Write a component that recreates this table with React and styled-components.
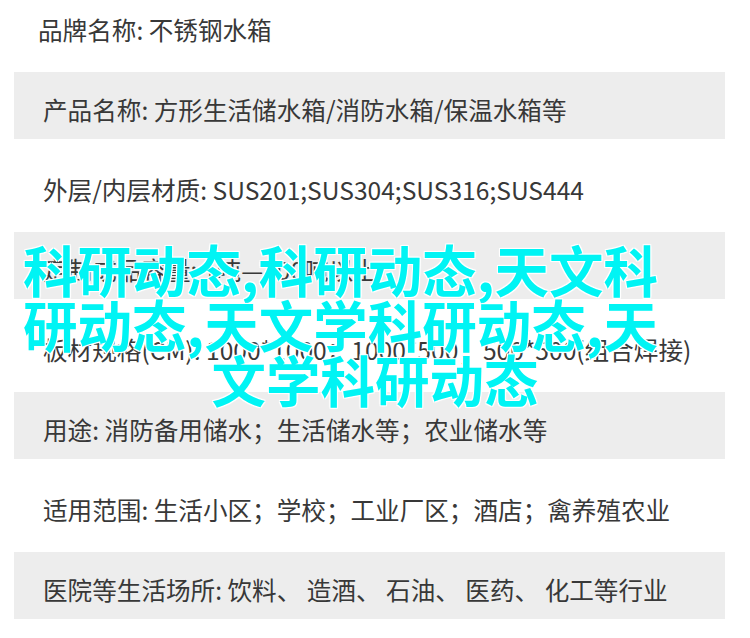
import React from "react";
import styled, { createGlobalStyle } from "styled-components";

const specs = [
    { text: "品牌名称: 不锈钢水箱", indent: 38 },
    { text: "产品名称: 方形生活储水箱/消防水箱/保温水箱等" },
    { text: "外层/内层材质: SUS201;SUS304;SUS316;SUS444" },
    { text: "定制成品容量: 1吨—300吨以上" },
    { text: "板材规格(CM): 1000*1000；1000*500；500*500(组合焊接)" },
    { text: "用途: 消防备用储水；生活储水等；农业储水等" },
    { text: "适用范围: 生活小区；学校；工业厂区；酒店；禽养殖农业" },
    { text: "医院等生活场所: 饮料、 造酒、 石油、 医药、 化工等行业" },
];

const App = () => {
    return (
        <>
            <GlobalStyle />
            <Page>
                <SpecList>
                    {specs.map((spec, i) => (
                        <SpecRow key={i} $shaded={i % 2 === 1} $indent={spec.indent}>
                            {spec.text}
                        </SpecRow>
                    ))}
                </SpecList>

                {/* title overlay */}
                <Headline>
                    <HeadLine>科研动态,科研动态,天文科</HeadLine>
                    <HeadLine>研动态,天文学科研动态,天</HeadLine>
                    <HeadLine $center>文学科研动态</HeadLine>
                </Headline>
            </Page>
        </>
    )
}

export default App

// Styled Components

const GlobalStyle = createGlobalStyle`
    html, body {
        margin: 0;
        padding: 0;
        background: #ffffff;
    }
    body {
        font-family: "Noto Sans CJK SC", "Noto Sans", sans-serif;
    }
`

const Page = styled.div`
    position: relative;
    width: 750px;
    height: 638px;
    overflow: hidden;
    background: #ffffff;
`

const SpecList = styled.div`
    display: flex;
    flex-direction: column;
    margin-top: -21px;
`

const SpecRow = styled.div`
    display: flex;
    align-items: center;
    box-sizing: border-box;
    height: ${p => (p.$shaded ? "67px" : "93px")};
    margin: ${p => (p.$shaded ? "0 25px 0 14px" : "0")};
    padding-top: 6px;
    padding-left: ${p => (p.$shaded ? 29 : (p.$indent || 43))}px;
    background-color: ${p => (p.$shaded ? "#ededed" : "#ffffff")};
    color: #383838;
    font-size: 24.6px;
    white-space: nowrap;
`

const Headline = styled.div`
    position: absolute;
    top: 241px;
    left: 0;
    right: 0;
    padding-left: 23px;
    color: #00f4f4;
    font-family: "Noto Sans CJK SC", sans-serif;
    font-weight: 700;
    font-size: 54.5px;
    line-height: 55px;
    text-shadow: 1px 1px 0 #fff, -1px -1px 0 #fff, 1px -1px 0 #fff, -1px 1px 0 #fff, 0 0 3px #fff;
`

const HeadLine = styled.div`
    white-space: nowrap;
    text-align: ${p => (p.$center ? "center" : "left")};
    margin-left: ${p => (p.$center ? "-23px" : "0")};
`
